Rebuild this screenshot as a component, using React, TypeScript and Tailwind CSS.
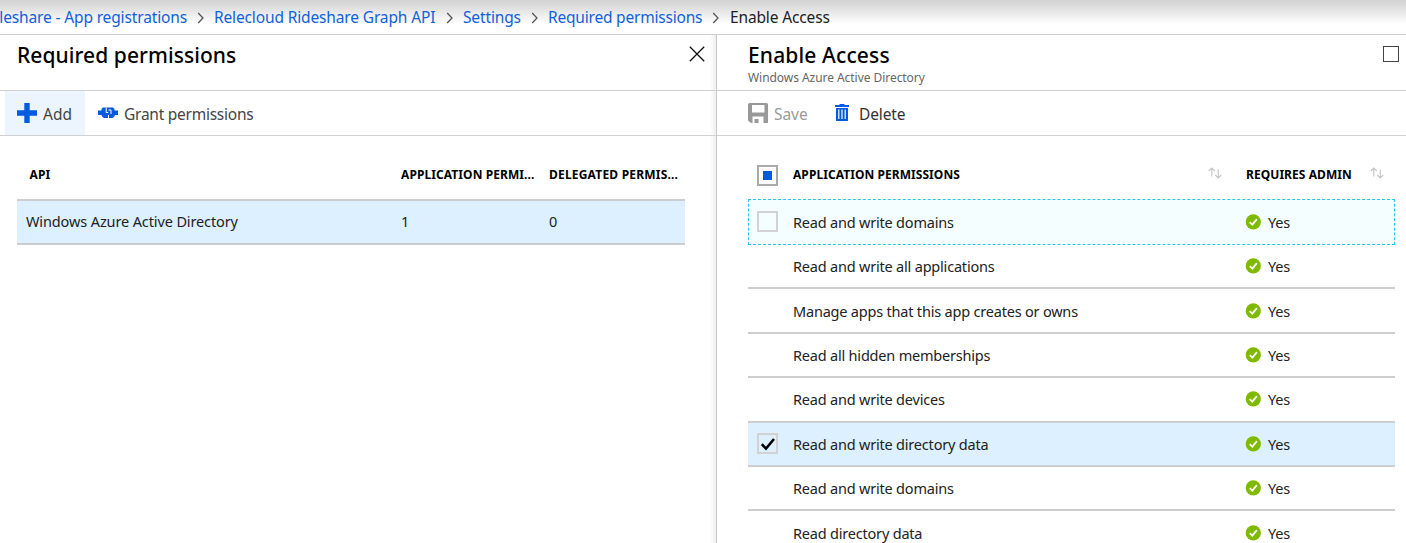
import React from "react";

const permissions = [
  "Read and write domains",
  "Read and write all applications",
  "Manage apps that this app creates or owns",
  "Read all hidden memberships",
  "Read and write devices",
  "Read and write directory data",
  "Read and write domains",
  "Read directory data",
];

const crumbs = [
  { label: "Relecloud Rideshare Graph API", cls: "w-[222px]" },
  { label: "Settings", cls: "w-[58px]" },
  { label: "Required permissions", cls: "w-[154px] tracking-[-0.2px]" },
];

function Chevron() {
  return (
    <svg className="mx-[9px] h-[12px] w-[9px] shrink-0" viewBox="0 0 9 12" fill="none" stroke="#555" strokeWidth="1.3">
      <path d="M2.2 1L7 6L2.2 11" />
    </svg>
  );
}

function SortIcon() {
  return (
    <svg className="mb-[7px] h-[12px] w-[14px] shrink-0" viewBox="0 0 14 12" fill="none" stroke="#c4c4c4" strokeWidth="1.1">
      <path d="M3.8 9.5V1M0.8 4L3.8 1L6.8 4M10.3 2.5V11M7.3 8L10.3 11L13.3 8" />
    </svg>
  );
}

function YesIcon() {
  return (
    <svg className="h-[16px] w-[16px] shrink-0" viewBox="0 0 16 16">
      <circle cx="8.3" cy="7.9" r="7.6" fill="#7fba00" />
      <path d="M4.7 8.1L7.3 10.6L11.9 5.2" fill="none" stroke="#fff" strokeWidth="1.8" />
    </svg>
  );
}

function Crumb({ label, cls }: { label: string; cls: string }) {
  return <span className={`${cls} shrink-0`}>{label}</span>;
}

function PermissionRow({ label, index }: { label: string; index: number }) {
  const focused = index === 0;
  const checked = index === 5;
  const tone = focused
    ? "border border-dashed border-[#2bc4ee] bg-[#f4fdff] h-[46px] -mt-px pb-px"
    : checked
      ? "border-b-2 border-[#cbcdd0] bg-[#dcf0ff] h-[44.4px]"
      : "border-b-2 border-[#cdcdcd] h-[44.4px]";
  return (
    <div className={`${tone} flex shrink-0 items-center`}>
      <div className={focused ? "w-[44px] pl-[8px]" : "w-[45px] pl-[9px]"}>
        {(focused || checked) && (
          <div className="flex h-[21px] w-[21px] items-center justify-center border-2 border-[#d2d2d2]">
            {checked && (
              <svg className="h-[14px] w-[14px] shrink-0" viewBox="0 0 14 14" fill="none" stroke="#000" strokeWidth="2.6">
                <path d="M0.8 7.2L5 11.6L13 2" />
              </svg>
            )}
          </div>
        )}
      </div>
      <span className="w-[452px] pt-[2px]">{label}</span>
      <YesIcon />
      <span className="ml-[7px] pt-[2px]">Yes</span>
    </div>
  );
}

export default function App() {
  return (
    <div className="flex h-[543px] w-[1406px] flex-col overflow-hidden bg-white font-['Noto_Sans','Open_Sans',sans-serif] text-[14.5px] tracking-[-0.2px] text-[#222]">
      <nav className="flex h-[35px] shrink-0 items-center border-b border-[#cecece] bg-[linear-gradient(#d4d4d4_0,#dadada_5px,#ffffff_24px)] pt-[2px] text-[15.5px] tracking-[-0.14px] whitespace-nowrap text-[#1261db]">
        <span className="flex w-[187px] shrink-0 justify-end">leshare - App registrations</span>
        {crumbs.map((c) => (
          <React.Fragment key={c.label}>
            <Chevron />
            <Crumb label={c.label} cls={c.cls} />
          </React.Fragment>
        ))}
        <Chevron />
        <span className="ml-px text-[#222]">Enable Access</span>
      </nav>
      <main className="flex min-h-0 flex-1 whitespace-nowrap">
        <section className="flex w-[717px] shrink-0 flex-col border-r border-[#c9c9c9] bg-[linear-gradient(to_left,#eeeeee_0,#ffffff_6px)]">
          <header className="flex h-[56px] shrink-0 justify-between border-b border-[#d0d0d0] pr-[11px] pl-[17px]">
            <h1 className="pt-[5px] text-[21px] leading-[30px] font-medium tracking-[0.07px] text-black">Required permissions</h1>
            <svg className="mt-[11px] h-[16px] w-[16px]" viewBox="0 0 16 16" stroke="#111" strokeWidth="1.3">
              <path d="M0.8 0.8L15.2 15.2M15.2 0.8L0.8 15.2" />
            </svg>
          </header>
          <div className="flex h-[45px] shrink-0 items-center border-b border-[#d0d0d0] pl-[5px] text-[15.5px] text-[#444]">
            <div className="flex h-full w-[80px] items-center bg-[#ecf5fe] pl-[12px]">
              <svg className="h-[20px] w-[20px]" viewBox="0 0 20 20" fill="#005cdc">
                <path d="M7.3 0h5.4v7.3H20v5.4h-7.3V20H7.3v-7.3H0V7.3h7.3z" />
              </svg>
              <span className="ml-[6px] pt-[3px] tracking-normal">Add</span>
            </div>
            <svg className="ml-[13px] h-[12px] w-[20px]" viewBox="0 0 20 12" fill="#005cdc">
              <path d="M0 3.5H3.5V2L5 .5H15L16.5 2V3.5H20V8H17L16 10L14.5 11H6L4 9.5L3.5 8H0z" />
              <path d="M8.2 .5V5.5H10.2M10.5 3H13V7M10.5 8V11" fill="none" stroke="#fff" strokeWidth="1" />
            </svg>
            <span className="ml-[6px] pt-[3px] tracking-[-0.25px]">Grant permissions</span>
          </div>
          <div className="flex h-[63px] shrink-0 items-end px-[17px] pb-[15px] text-[12px] font-bold tracking-[0.08px] text-black">
            <span className="w-[384px] pl-[12.5px]">API</span>
            <span className="w-[148px]">APPLICATION PERMI...</span>
            <span className="tracking-[0.2px]">DELEGATED PERMIS...</span>
          </div>
          <div className="mx-[17px] flex h-[46px] w-[668px] shrink-0 items-center border-t-2 border-b-2 border-[#cbcdd0] bg-[#dcf0ff]">
            <span className="w-[384px] pl-[9px] tracking-[-0.12px]">Windows Azure Active Directory</span>
            <span className="w-[148px]">1</span>
            <span>0</span>
          </div>
        </section>
        <section className="flex min-w-0 flex-1 flex-col">
          <header className="flex h-[56px] shrink-0 justify-between border-b border-[#d0d0d0] pr-[7px] pl-[31px]">
            <div>
              <h1 className="pt-[5px] text-[21px] leading-[30px] font-medium tracking-[0.14px] text-black">Enable Access</h1>
              <p className="text-[12px] leading-[15px] tracking-[-0.05px] text-[#666]">Windows Azure Active Directory</p>
            </div>
            <div className="mt-[11px] flex h-[16px] w-[16px] border-[1.5px] border-[#444]" />
          </header>
          <div className="flex h-[45px] shrink-0 items-center border-b border-[#d0d0d0] pl-[31px] text-[15.5px] text-[#333]">
            <svg className="h-[20px] w-[20px]" viewBox="0 0 20 20" fill="#999">
              <path fillRule="evenodd" d="M1.5 0H18.5Q20 0 20 1.5V20H15.5V13.5H4.5V20H3L0 17.5V1.5Q0 0 1.5 0zM4 2V9.5H16.5V2zM6.5 16H10.5V20H6.5z" />
            </svg>
            <span className="ml-[6px] w-[61px] pt-[3px] tracking-[-0.05px] text-[#999]">Save</span>
            <svg className="-mt-px h-[17px] w-[14px]" viewBox="0 0 14 17" fill="#005cdc">
              <path fillRule="evenodd" d="M4.5 0h5v1H14v2H0V1h4.5zM1 4h12v13H1zM3.2 5.5v9.5h1.2V5.5zM6.4 5.5v9.5h1.2V5.5zM9.6 5.5v9.5h1.2V5.5z" />
            </svg>
            <span className="ml-[10px] pt-[3px] tracking-[-0.12px]">Delete</span>
          </div>
          <div className="flex h-[64px] shrink-0 items-end pb-[14px] pl-[40px] text-[12px] font-bold tracking-[0.06px] text-black">
            <div className="flex h-[21px] w-[21px] items-center justify-center border-2 border-[#aaa]">
              <div className="h-[9px] w-[9px] bg-[#005cdc]" />
            </div>
            <span className="mb-[2px] ml-[15px] w-[415px]">APPLICATION PERMISSIONS</span>
            <SortIcon />
            <span className="mb-[2px] ml-[24px] w-[124px]">REQUIRES ADMIN</span>
            <SortIcon />
          </div>
          <div className="ml-[31px] flex w-[647px] flex-col">
            {permissions.map((label, i) => (
              <PermissionRow key={i} label={label} index={i} />
            ))}
          </div>
        </section>
      </main>
    </div>
  );
}
